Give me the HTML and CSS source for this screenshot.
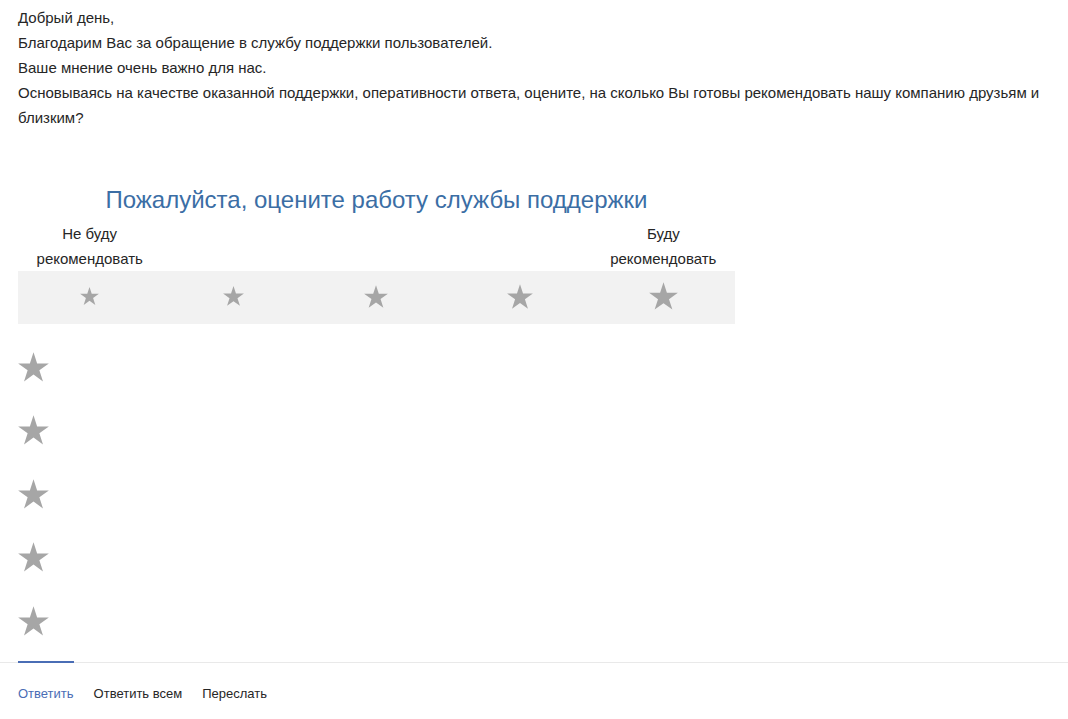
FILE: index.html
```html
<!DOCTYPE html>
<html lang="ru">

<head>
  <meta charset="UTF-8">
  <title>Оцените работу службы поддержки</title>
  <link rel="stylesheet" href="styles.css">
</head>

<body>
  <svg class="defs" width="0" height="0">
    <symbol id="star" viewBox="2 0 96 91">
      <polygon points="50,0 61.23,34.55 97.55,34.55 68.17,55.9 79.39,90.45 50,69.1 20.61,90.45 31.83,55.9 2.45,34.55 38.77,34.55" />
    </symbol>
  </svg>

  <div class="message">
    <section class="intro">
      <p>Добрый день,</p>
      <p>Благодарим Вас за обращение в службу поддержки пользователей.</p>
      <p>Ваше мнение очень важно для нас.</p>
      <p>Основываясь на качестве оказанной поддержки, оперативности ответа, оцените, на сколько Вы готовы рекомендовать нашу компанию друзьям и близким?</p>
    </section>

    <section class="rating">
      <h2>Пожалуйста, оцените работу службы поддержки</h2>
      <div class="labels">
        <div class="label">Не буду<br>рекомендовать</div>
        <div></div>
        <div></div>
        <div></div>
        <div class="label">Буду<br>рекомендовать</div>
      </div>
      <div class="scale">
        <a class="cell"><svg class="star s1"><use href="#star" /></svg></a>
        <a class="cell"><svg class="star s2"><use href="#star" /></svg></a>
        <a class="cell"><svg class="star s3"><use href="#star" /></svg></a>
        <a class="cell"><svg class="star s4"><use href="#star" /></svg></a>
        <a class="cell"><svg class="star s5"><use href="#star" /></svg></a>
      </div>
    </section>

    <section class="stars-list">
      <div class="item"><svg class="star big"><use href="#star" /></svg></div>
      <div class="item"><svg class="star big"><use href="#star" /></svg></div>
      <div class="item"><svg class="star big"><use href="#star" /></svg></div>
      <div class="item"><svg class="star big"><use href="#star" /></svg></div>
      <div class="item"><svg class="star big"><use href="#star" /></svg></div>
    </section>
  </div>

  <footer class="actions">
    <a class="tab active">Ответить</a>
    <a class="tab">Ответить всем</a>
    <a class="tab">Переслать</a>
  </footer>
</body>

</html>
```

FILE: styles.css
```css
body {
  margin: 0;
  font-family: "Liberation Sans", Arial, sans-serif;
  font-size: 15px;
  color: #262626;
  background: #fff;
}

.defs {
  position: absolute;
}

.message {
  padding: 5px 18px 0;
}

.intro p {
  margin: 0;
  line-height: 25px;
}

.rating {
  width: 717px;
  margin-top: 55px;
}

.rating h2 {
  margin: 0;
  font-size: 24px;
  font-weight: normal;
  line-height: 30px;
  text-align: center;
  color: #3b6ea5;
}

.labels,
.scale {
  display: grid;
  grid-template-columns: repeat(5, 1fr);
}

.labels {
  margin-top: 6px;
}

.label {
  line-height: 25px;
  text-align: center;
}

.scale {
  height: 53px;
  background: #f2f2f2;
}

.scale .cell {
  display: flex;
  align-items: center;
  justify-content: center;
  padding-bottom: 3px;
}

.star {
  fill: #a6a6a6;
  display: block;
}

.star.s1 { width: 19px; height: 18px; }
.star.s2 { width: 21px; height: 20px; }
.star.s3 { width: 24px; height: 23px; }
.star.s4 { width: 26px; height: 25px; }
.star.s5 { width: 29px; height: 28px; }
.star.big { width: 31px; height: 30px; }

.stars-list {
  margin-top: 11px;
}

.stars-list .item {
  height: 63.5px;
  display: flex;
  align-items: center;
}

.actions {
  margin-top: 9px;
  border-top: 1px solid #e9e9e9;
  padding: 0 18px;
  display: flex;
  gap: 20px;
  font-size: 13px;
}

.tab {
  color: #262626;
  margin-top: -2px;
  border-top: 2px solid transparent;
  padding-top: 22px;
  line-height: 18px;
}

.tab.active {
  color: #4a6db5;
  border-top-color: #4a6db5;
}
```
